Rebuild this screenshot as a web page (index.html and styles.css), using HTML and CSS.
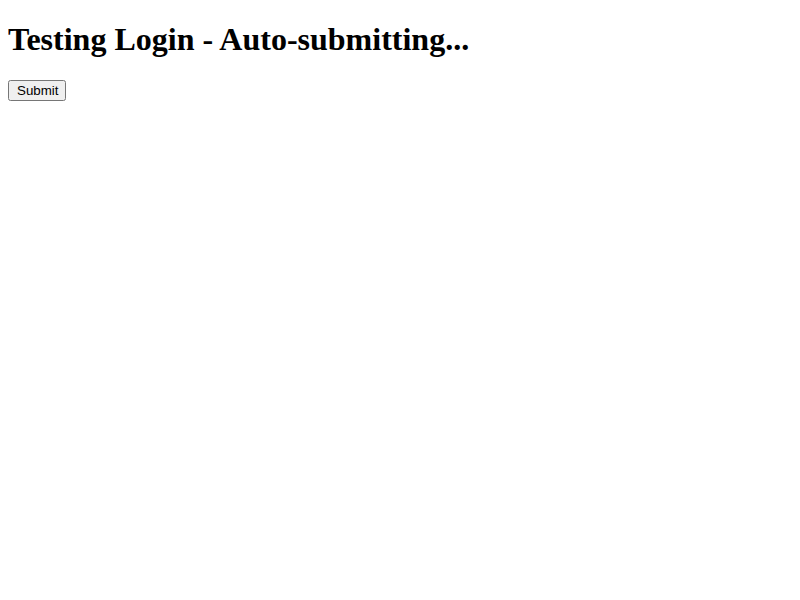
FILE: index.html
```html
<!DOCTYPE html>
<html>
<head>
<meta charset="utf-8">
<title>Testing Login</title>
<link rel="stylesheet" href="styles.css">
</head>
<body class="page">
<h1 class="title">Testing Login - Auto-submitting...</h1>
<form class="login-form" action="#" method="post" onsubmit="return false;">
<button class="submit-btn" type="submit">Submit</button>
</form>
</body>
</html>
```

FILE: styles.css
```css
.page {
  margin: 8px;
  font-family: "Liberation Serif", serif;
}
.title {
  margin: 13.44px 0 21.44px;
  font-family: "Liberation Serif", serif;
  font-size: 32px;
  font-weight: bold;
}
.login-form {
  margin: 0;
}
.submit-btn {
  box-sizing: border-box;
  height: 21px;
  padding: 1px 6px 1px 7px;
  font-family: "Liberation Sans", sans-serif;
  font-size: 13.333px;
}
```
